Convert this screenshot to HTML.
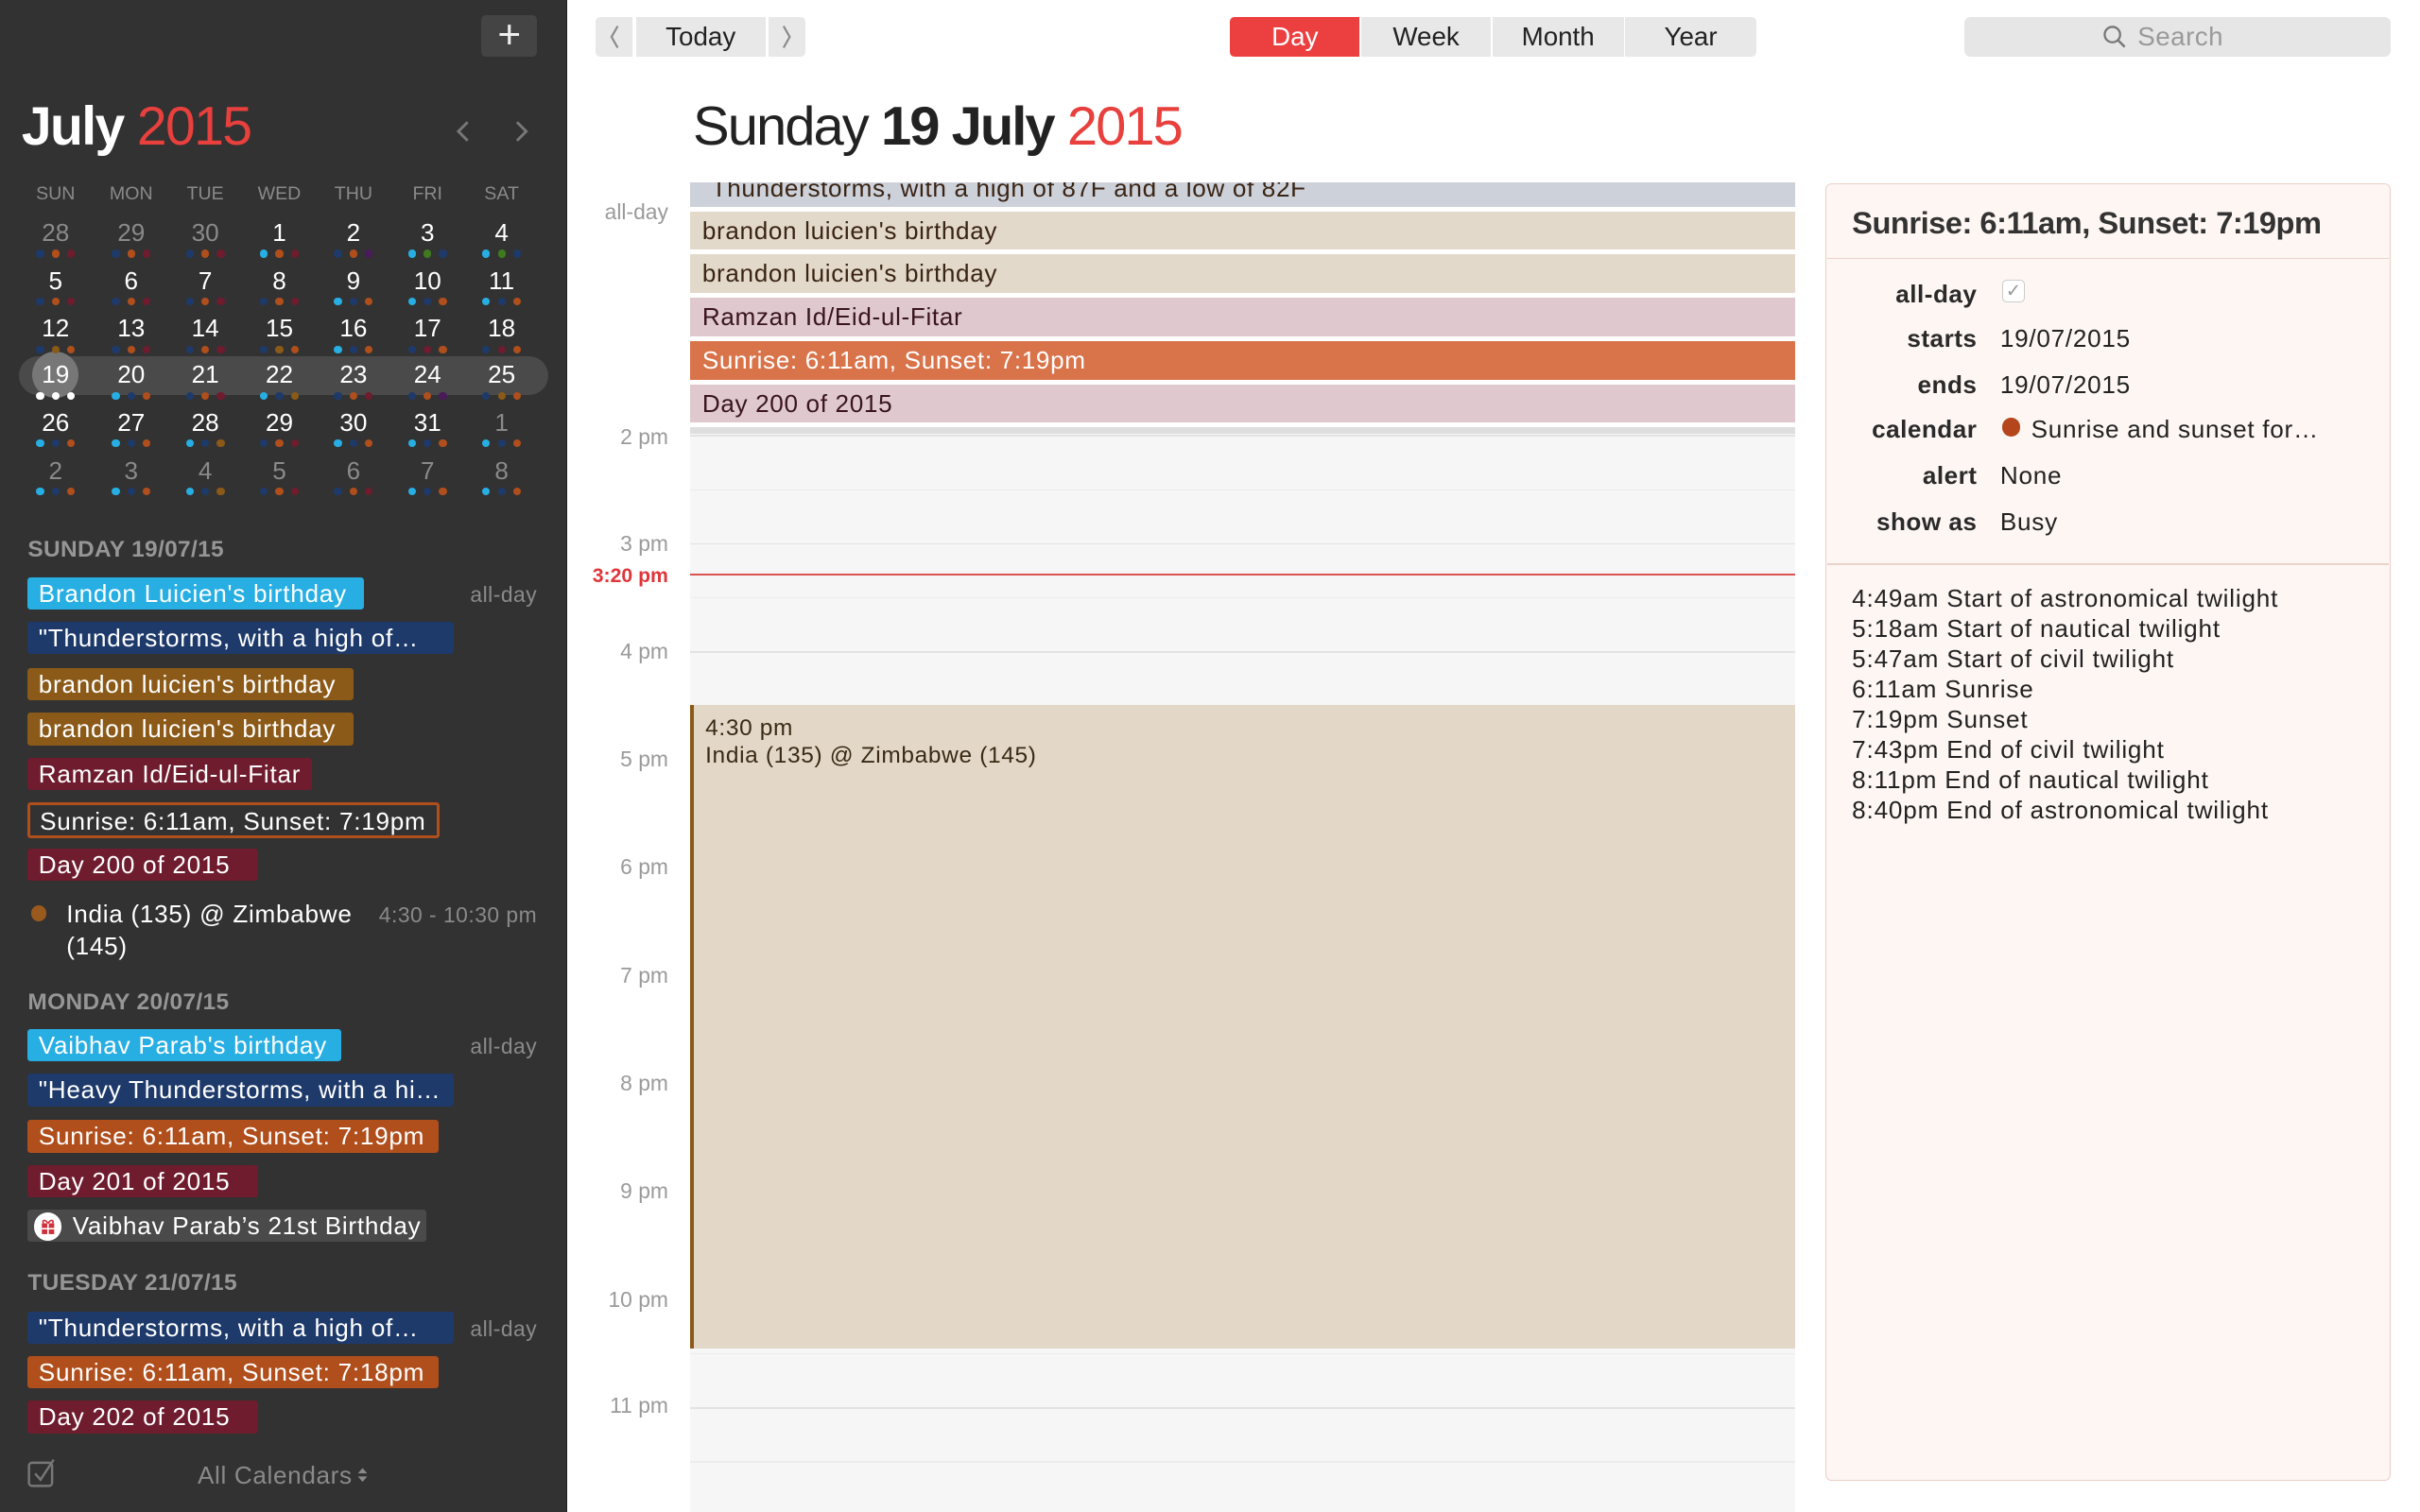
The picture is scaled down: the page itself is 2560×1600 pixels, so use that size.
<!DOCTYPE html>
<html><head><meta charset="utf-8"><style>
html,body{margin:0;padding:0;width:2560px;height:1600px;overflow:hidden;background:#fff}
#w{position:absolute;left:0;top:0;width:1568px;height:980px;zoom:1.63265;font-family:"Liberation Sans",sans-serif;overflow:hidden}
.a{position:absolute;white-space:nowrap}
#sb{position:absolute;left:0;top:0;width:367px;height:980px;background:#323232;border-right:1px solid #1e1e1e}
.dh{position:absolute;top:119px;width:40px;text-align:center;font-size:12px;color:#8a8a8a}
.d{position:absolute;width:40px;text-align:center;font-size:16px;color:#fff;line-height:20px}
.d.g{color:#8a8a8a}
.d b{display:block;height:6px;line-height:0;font-size:0;margin-top:1px}
.d b i{display:inline-block;width:5px;height:5px;border-radius:50%;margin:0 2.5px}
.c{background:#27aee3}.n{background:#1e3a6b}.o{background:#b04e1c}.m{background:#6e1c2e}.g2{background:#3f7a1e}.p{background:#4a1a5a}.b{background:#8b5a18}.w{background:#fff}
.hd{position:absolute;left:18px;font-size:15px;font-weight:bold;color:#969696;letter-spacing:0.2px}
.ev{position:absolute;left:18px;height:21px;line-height:21px;font-size:16px;color:#fff;padding-left:7px;border-radius:2px;box-sizing:border-box;white-space:nowrap;letter-spacing:0.45px}
.ad{position:absolute;right:19px;font-size:14px;color:#8a8a8a;letter-spacing:0.3px}
.btn{position:absolute;top:11px;height:26px;line-height:26px;background:#e8e8e8;text-align:center;font-size:17px;color:#222}
.ab{position:absolute;left:447px;width:716px;height:25px;line-height:25px;font-size:16px;padding-left:8px;box-sizing:border-box;color:#3a2414;letter-spacing:0.4px}
.tl{position:absolute;right:1135px;font-size:14px;color:#9a9a9a;text-align:right}
.hl{position:absolute;left:447px;width:716px;height:1px;background:#e2e2e2}
.hh{position:absolute;left:447px;width:716px;height:1px;background:#ececec}
.lb{position:absolute;right:287px;font-size:16px;font-weight:bold;color:#2a2a2a;text-align:right;letter-spacing:0.3px}
.vl{position:absolute;left:1296px;font-size:16px;color:#222;letter-spacing:0.45px}
</style></head><body><div id="w">
<div id="sb">
<div class="a" style="left:312px;top:10px;width:36px;height:27px;background:#444;border-radius:3px;color:#eee;font-size:26px;line-height:26px;text-align:center;font-weight:300">+</div>
<div class="a" style="left:14px;top:62px;font-size:35px;color:#fff;letter-spacing:-1px"><span style="font-weight:bold">July</span> <span style="color:#e8403d">2015</span></div>
<svg class="a" style="left:294px;top:77px" width="12" height="16" viewBox="0 0 12 16"><path d="M9 2 L3 8 L9 14" fill="none" stroke="#777" stroke-width="1.8"/></svg>
<svg class="a" style="left:332px;top:77px" width="12" height="16" viewBox="0 0 12 16"><path d="M3 2 L9 8 L3 14" fill="none" stroke="#777" stroke-width="1.8"/></svg>
<div class="dh" style="left:16px">SUN</div><div class="dh" style="left:65px">MON</div><div class="dh" style="left:113px">TUE</div><div class="dh" style="left:161px">WED</div><div class="dh" style="left:209px">THU</div><div class="dh" style="left:257px">FRI</div><div class="dh" style="left:305px">SAT</div>
<div class="a" style="left:12px;top:231px;width:343px;height:25px;background:#4a4a4a;border-radius:13px"></div>
<div class="a" style="left:21px;top:228px;width:30px;height:30px;background:#777;border-radius:50%"></div>
<!-- row1 -->
<div class="d g" style="left:16px;top:141px">28<b><i class="n"></i><i class="o"></i><i class="m"></i></b></div>
<div class="d g" style="left:65px;top:141px">29<b><i class="n"></i><i class="o"></i><i class="m"></i></b></div>
<div class="d g" style="left:113px;top:141px">30<b><i class="n"></i><i class="o"></i><i class="m"></i></b></div>
<div class="d" style="left:161px;top:141px">1<b><i class="c"></i><i class="o"></i><i class="m"></i></b></div>
<div class="d" style="left:209px;top:141px">2<b><i class="n"></i><i class="o"></i><i class="p"></i></b></div>
<div class="d" style="left:257px;top:141px">3<b><i class="c"></i><i class="g2"></i><i class="n"></i></b></div>
<div class="d" style="left:305px;top:141px">4<b><i class="c"></i><i class="g2"></i><i class="n"></i></b></div>
<!-- row2 -->
<div class="d" style="left:16px;top:172px">5<b><i class="n"></i><i class="o"></i><i class="m"></i></b></div>
<div class="d" style="left:65px;top:172px">6<b><i class="n"></i><i class="o"></i><i class="m"></i></b></div>
<div class="d" style="left:113px;top:172px">7<b><i class="n"></i><i class="o"></i><i class="m"></i></b></div>
<div class="d" style="left:161px;top:172px">8<b><i class="n"></i><i class="o"></i><i class="m"></i></b></div>
<div class="d" style="left:209px;top:172px">9<b><i class="c"></i><i class="n"></i><i class="o"></i></b></div>
<div class="d" style="left:257px;top:172px">10<b><i class="c"></i><i class="n"></i><i class="o"></i></b></div>
<div class="d" style="left:305px;top:172px">11<b><i class="c"></i><i class="n"></i><i class="o"></i></b></div>
<!-- row3 -->
<div class="d" style="left:16px;top:203px">12<b><i class="n"></i><i class="b"></i><i class="o"></i></b></div>
<div class="d" style="left:65px;top:203px">13<b><i class="n"></i><i class="o"></i><i class="m"></i></b></div>
<div class="d" style="left:113px;top:203px">14<b><i class="n"></i><i class="o"></i><i class="m"></i></b></div>
<div class="d" style="left:161px;top:203px">15<b><i class="n"></i><i class="b"></i><i class="o"></i></b></div>
<div class="d" style="left:209px;top:203px">16<b><i class="c"></i><i class="n"></i><i class="o"></i></b></div>
<div class="d" style="left:257px;top:203px">17<b><i class="n"></i><i class="m"></i><i class="o"></i></b></div>
<div class="d" style="left:305px;top:203px">18<b><i class="n"></i><i class="m"></i><i class="o"></i></b></div>
<!-- row4 -->
<div class="d" style="left:16px;top:233px">19<b><i class="w"></i><i class="w"></i><i class="w"></i></b></div>
<div class="d" style="left:65px;top:233px">20<b><i class="c"></i><i class="n"></i><i class="o"></i></b></div>
<div class="d" style="left:113px;top:233px">21<b><i class="n"></i><i class="o"></i><i class="m"></i></b></div>
<div class="d" style="left:161px;top:233px">22<b><i class="c"></i><i class="n"></i><i class="b"></i></b></div>
<div class="d" style="left:209px;top:233px">23<b><i class="n"></i><i class="o"></i><i class="m"></i></b></div>
<div class="d" style="left:257px;top:233px">24<b><i class="n"></i><i class="o"></i><i class="p"></i></b></div>
<div class="d" style="left:305px;top:233px">25<b><i class="n"></i><i class="b"></i><i class="o"></i></b></div>
<!-- row5 -->
<div class="d" style="left:16px;top:264px">26<b><i class="c"></i><i class="n"></i><i class="o"></i></b></div>
<div class="d" style="left:65px;top:264px">27<b><i class="c"></i><i class="n"></i><i class="o"></i></b></div>
<div class="d" style="left:113px;top:264px">28<b><i class="c"></i><i class="n"></i><i class="b"></i></b></div>
<div class="d" style="left:161px;top:264px">29<b><i class="n"></i><i class="o"></i><i class="m"></i></b></div>
<div class="d" style="left:209px;top:264px">30<b><i class="c"></i><i class="n"></i><i class="o"></i></b></div>
<div class="d" style="left:257px;top:264px">31<b><i class="c"></i><i class="n"></i><i class="o"></i></b></div>
<div class="d g" style="left:305px;top:264px">1<b><i class="c"></i><i class="n"></i><i class="o"></i></b></div>
<!-- row6 -->
<div class="d g" style="left:16px;top:295px">2<b><i class="c"></i><i class="n"></i><i class="o"></i></b></div>
<div class="d g" style="left:65px;top:295px">3<b><i class="c"></i><i class="n"></i><i class="o"></i></b></div>
<div class="d g" style="left:113px;top:295px">4<b><i class="c"></i><i class="n"></i><i class="b"></i></b></div>
<div class="d g" style="left:161px;top:295px">5<b><i class="n"></i><i class="o"></i><i class="m"></i></b></div>
<div class="d g" style="left:209px;top:295px">6<b><i class="n"></i><i class="o"></i><i class="m"></i></b></div>
<div class="d g" style="left:257px;top:295px">7<b><i class="c"></i><i class="n"></i><i class="o"></i></b></div>
<div class="d g" style="left:305px;top:295px">8<b><i class="c"></i><i class="n"></i><i class="o"></i></b></div>

<div class="hd" style="top:348px">SUNDAY 19/07/15</div>
<div class="ev" style="top:374px;width:218px;background:#27aee3">Brandon Luicien's birthday</div><div class="ad" style="top:377px">all-day</div>
<div class="ev" style="top:403px;width:276px;background:#1e3a6b">"Thunderstorms, with a high of…</div>
<div class="ev" style="top:433px;width:211px;background:#8b5a18">brandon luicien's birthday</div>
<div class="ev" style="top:462px;width:211px;background:#8b5a18">brandon luicien's birthday</div>
<div class="ev" style="top:491px;width:184px;background:#6e1c2e">Ramzan Id/Eid-ul-Fitar</div>
<div class="ev" style="top:520px;width:267px;height:23px;line-height:21px;border:2px solid #b04e1c;padding-left:6px">Sunrise: 6:11am, Sunset: 7:19pm</div>
<div class="ev" style="top:550px;width:149px;background:#6e1c2e">Day 200 of 2015</div>
<div class="a" style="left:20px;top:587px;width:10px;height:10px;border-radius:50%;background:#9a5a1e"></div>
<div class="a" style="left:43px;top:582px;font-size:16px;color:#fff;line-height:21px;letter-spacing:0.45px">India (135) @ Zimbabwe<br>(145)</div>
<div class="ad" style="top:585px">4:30 - 10:30 pm</div>

<div class="hd" style="top:641px">MONDAY 20/07/15</div>
<div class="ev" style="top:667px;width:203px;background:#27aee3">Vaibhav Parab's birthday</div><div class="ad" style="top:670px">all-day</div>
<div class="ev" style="top:696px;width:276px;background:#1e3a6b">"Heavy Thunderstorms, with a hi…</div>
<div class="ev" style="top:726px;width:266px;background:#b04e1c">Sunrise: 6:11am, Sunset: 7:19pm</div>
<div class="ev" style="top:755px;width:149px;background:#6e1c2e">Day 201 of 2015</div>
<div class="ev" style="top:784px;width:258px;background:#4a4a4a;padding-left:29px">Vaibhav Parab’s 21st Birthday</div>
<div class="a" style="left:22px;top:786px;width:18px;height:18px;border-radius:50%;background:#fff"></div>
<svg class="a" style="left:25px;top:789px" width="12" height="12" viewBox="0 0 12 12"><rect x="2" y="4" width="8" height="7" fill="#d0303a"/><path d="M2 7.5 H10 M6 4 V11" stroke="#fff" stroke-width="1"/><path d="M6 4 C4 1 2 2 3 4 M6 4 C8 1 10 2 9 4" fill="none" stroke="#d0303a" stroke-width="1"/></svg>

<div class="hd" style="top:823px">TUESDAY 21/07/15</div>
<div class="ev" style="top:850px;width:276px;background:#1e3a6b">"Thunderstorms, with a high of…</div><div class="ad" style="top:853px">all-day</div>
<div class="ev" style="top:879px;width:266px;background:#b04e1c">Sunrise: 6:11am, Sunset: 7:18pm</div>
<div class="ev" style="top:908px;width:149px;background:#6e1c2e">Day 202 of 2015</div>
<svg class="a" style="left:18px;top:945px" width="20" height="20" viewBox="0 0 20 20"><rect x="1" y="3" width="15" height="15" rx="2" fill="none" stroke="#777" stroke-width="1.5"/><path d="M5 10 L8.5 14 L17 1" fill="none" stroke="#777" stroke-width="1.5"/></svg>
<div class="a" style="left:128px;top:947px;font-size:16px;color:#8a8a8a;letter-spacing:0.4px">All Calendars</div>
<svg class="a" style="left:231px;top:950px" width="8" height="12" viewBox="0 0 8 12"><path d="M1 5 L4 1.5 L7 5 Z M1 7 L4 10.5 L7 7 Z" fill="#8a8a8a"/></svg>
</div>

<!-- toolbar -->
<div class="btn" style="left:386px;width:24px;border-radius:3px 0 0 3px"></div>
<svg class="a" style="left:393px;top:16px" width="10" height="16" viewBox="0 0 10 16"><path d="M7 1 L3 8 L7 15" fill="none" stroke="#888" stroke-width="1.3"/></svg>
<div class="btn" style="left:412px;width:84px">Today</div>
<div class="btn" style="left:498px;width:24px;border-radius:0 3px 3px 0"></div>
<svg class="a" style="left:505px;top:16px" width="10" height="16" viewBox="0 0 10 16"><path d="M3 1 L7 8 L3 15" fill="none" stroke="#888" stroke-width="1.3"/></svg>
<div class="btn" style="left:797px;width:84px;background:#ec4040;color:#fff;border-radius:3px 0 0 3px">Day</div>
<div class="btn" style="left:882px;width:84px">Week</div>
<div class="btn" style="left:967px;width:85px">Month</div>
<div class="btn" style="left:1053px;width:85px;border-radius:0 3px 3px 0">Year</div>
<div class="a" style="left:1273px;top:11px;width:276px;height:26px;background:#e6e6e6;border-radius:4px"></div>
<svg class="a" style="left:1362px;top:16px" width="16" height="16" viewBox="0 0 16 16"><circle cx="6.5" cy="6.5" r="5" fill="none" stroke="#777" stroke-width="1.4"/><path d="M10 10 L14.5 14.5" stroke="#777" stroke-width="1.5"/></svg>
<div class="a" style="left:1385px;top:14px;font-size:17px;color:#9a9a9a;letter-spacing:0.3px">Search</div>

<div class="a" style="left:449px;top:62px;font-size:35.5px;color:#222;letter-spacing:-1.2px">Sunday <b>19 July</b> <span style="color:#e8403d">2015</span></div>

<!-- all-day -->
<div class="tl" style="top:129px">all-day</div>
<div class="ab" style="top:118px;height:16px;line-height:8px;background:#cdd1da;overflow:hidden;padding-left:14px">Thunderstorms, with a high of 87F and a low of 82F</div>
<div class="ab" style="top:137px;background:#e3d9ca">brandon luicien's birthday</div>
<div class="ab" style="top:165px;background:#e3d9ca">brandon luicien's birthday</div>
<div class="ab" style="top:193px;background:#dfc9cf;color:#3a1420">Ramzan Id/Eid-ul-Fitar</div>
<div class="ab" style="top:221px;background:#d9734a;color:#fff">Sunrise: 6:11am, Sunset: 7:19pm</div>
<div class="ab" style="top:249px;background:#dfc9cf;color:#3a1420">Day 200 of 2015</div>
<div class="a" style="left:447px;top:277px;width:716px;height:703px;background:#f6f6f6"></div>
<div class="a" style="left:447px;top:277px;width:716px;height:4px;background:#dedede"></div>
<div class="hl" style="top:282px"></div>
<div class="tl" style="top:275px">2 pm</div>
<div class="hh" style="top:317px"></div>
<div class="hl" style="top:352px"></div><div class="tl" style="top:344px">3 pm</div>
<div class="hh" style="top:387px"></div>
<div class="hl" style="top:422px"></div><div class="tl" style="top:414px">4 pm</div>
<div class="hl" style="top:492px"></div><div class="tl" style="top:484px">5 pm</div>
<div class="hl" style="top:562px"></div><div class="tl" style="top:554px">6 pm</div>
<div class="hl" style="top:632px"></div><div class="tl" style="top:624px">7 pm</div>
<div class="hl" style="top:702px"></div><div class="tl" style="top:694px">8 pm</div>
<div class="hl" style="top:772px"></div><div class="tl" style="top:764px">9 pm</div>
<div class="hl" style="top:842px"></div><div class="tl" style="top:834px">10 pm</div>
<div class="hh" style="top:877px"></div>
<div class="hl" style="top:912px"></div><div class="tl" style="top:903px">11 pm</div>
<div class="hh" style="top:947px"></div>
<div class="a" style="left:447px;top:372px;width:716px;height:1px;background:#d9534f"></div>
<div class="tl" style="top:366px;color:#e0353a;font-weight:bold;font-size:13px">3:20 pm</div>
<div class="a" style="left:447px;top:457px;width:716px;height:417px;background:#e3d8c8;border-left:3px solid #8b5a18;box-sizing:border-box"></div>
<div class="a" style="left:457px;top:463px;font-size:15px;color:#3a2a14;line-height:18px;letter-spacing:0.4px">4:30 pm<br>India (135) @ Zimbabwe (145)</div>

<!-- info panel -->
<div class="a" style="left:1183px;top:119px;width:366px;height:841px;background:#fdf6f3;border:1px solid #eccfc4;border-radius:4px;box-sizing:border-box"></div>
<div class="a" style="left:1200px;top:133px;font-size:20px;font-weight:bold;color:#333;letter-spacing:-0.3px">Sunrise: 6:11am, Sunset: 7:19pm</div>
<div class="a" style="left:1184px;top:167px;width:364px;height:1px;background:#ecd3ca"></div>
<div class="lb" style="top:181px">all-day</div>
<div class="a" style="left:1297px;top:181px;width:14px;height:14px;border:1px solid #ccc;border-radius:3px;background:#fff;font-size:12px;line-height:14px;text-align:center;color:#999">&#x2713;</div>
<div class="lb" style="top:210px">starts</div><div class="vl" style="top:210px">19/07/2015</div>
<div class="lb" style="top:240px">ends</div><div class="vl" style="top:240px">19/07/2015</div>
<div class="lb" style="top:269px">calendar</div>
<div class="a" style="left:1297px;top:271px;width:12px;height:12px;border-radius:50%;background:#b5461c"></div>
<div class="vl" style="left:1316px;top:269px">Sunrise and sunset for…</div>
<div class="lb" style="top:299px">alert</div><div class="vl" style="top:299px">None</div>
<div class="lb" style="top:329px">show as</div><div class="vl" style="top:329px">Busy</div>
<div class="a" style="left:1184px;top:365px;width:364px;height:1px;background:#ecd3ca"></div>
<div class="a" style="left:1200px;top:378px;font-size:16px;color:#222;line-height:19.6px;letter-spacing:0.5px">4:49am Start of astronomical twilight<br>5:18am Start of nautical twilight<br>5:47am Start of civil twilight<br>6:11am Sunrise<br>7:19pm Sunset<br>7:43pm End of civil twilight<br>8:11pm End of nautical twilight<br>8:40pm End of astronomical twilight</div>
</div></body></html>
